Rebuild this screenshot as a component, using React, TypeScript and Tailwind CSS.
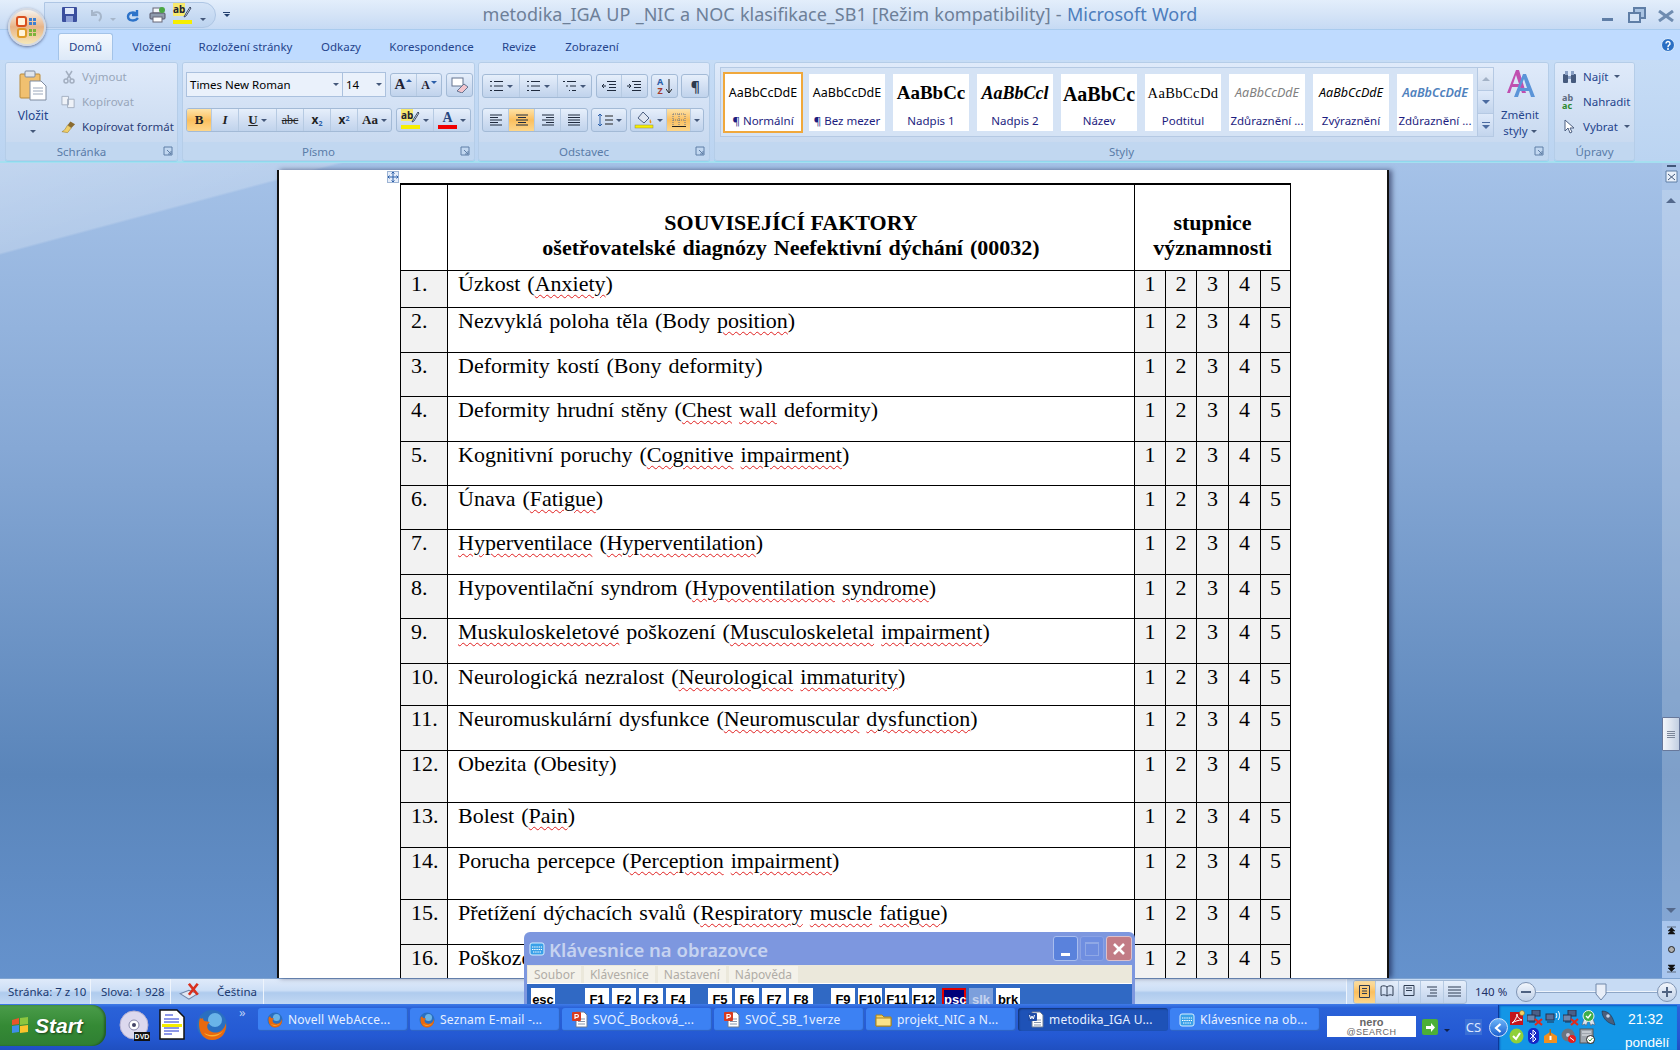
import React from "react";

const Sq = ({ children }: { children: React.ReactNode }) => (
  <span className="underline decoration-wavy decoration-[#e02020] decoration-1 underline-offset-[3px]">{children}</span>
);

const tableRows: { n: string; h: string; text: React.ReactNode }[] = [
  { n: "1.", h: "h-[37px]", text: <>Úzkost (<Sq>Anxiety</Sq>)</> },
  { n: "2.", h: "h-[45px]", text: <>Nezvyklá poloha těla (Body <Sq>position</Sq>)</> },
  { n: "3.", h: "h-[44px]", text: <>Deformity kostí (Bony deformity)</> },
  { n: "4.", h: "h-[45px]", text: <>Deformity hrudní stěny (<Sq>Chest</Sq> <Sq>wall</Sq> deformity)</> },
  { n: "5.", h: "h-[44px]", text: <>Kognitivní poruchy (<Sq>Cognitive</Sq> <Sq>impairment</Sq>)</> },
  { n: "6.", h: "h-[44px]", text: <>Únava (<Sq>Fatigue</Sq>)</> },
  { n: "7.", h: "h-[45px]", text: <><Sq>Hyperventilace</Sq> (<Sq>Hyperventilation</Sq>)</> },
  { n: "8.", h: "h-[44px]", text: <>Hypoventilační syndrom (<Sq>Hypoventilation</Sq> <Sq>syndrome</Sq>)</> },
  { n: "9.", h: "h-[45px]", text: <><Sq>Muskuloskeletové</Sq> poškození (<Sq>Musculoskeletal</Sq> <Sq>impairment</Sq>)</> },
  { n: "10.", h: "h-[42px]", text: <>Neurologická nezralost (<Sq>Neurological</Sq> <Sq>immaturity</Sq>)</> },
  { n: "11.", h: "h-[45px]", text: <>Neuromuskulární dysfunkce (<Sq>Neuromuscular</Sq> <Sq>dysfunction</Sq>)</> },
  { n: "12.", h: "h-[52px]", text: <>Obezita (Obesity)</> },
  { n: "13.", h: "h-[45px]", text: <>Bolest (<Sq>Pain</Sq>)</> },
  { n: "14.", h: "h-[52px]", text: <>Porucha percepce (<Sq>Perception</Sq> <Sq>impairment</Sq>)</> },
  { n: "15.", h: "h-[45px]", text: <>Přetížení dýchacích svalů (<Sq>Respiratory</Sq> <Sq>muscle</Sq> <Sq>fatigue</Sq>)</> },
  { n: "16.", h: "h-[45px]", text: <>Poškození</> },
];

const scoreCols = ["w-[31px]", "w-[31px]", "w-[32px]", "w-[32px]", "w-[29px]"];

const Caret = ({ c = "border-t-[#44587a]" }: { c?: string }) => (
  <span className={`inline-block w-0 h-0 border-x-[3px] border-x-transparent border-t-[3px] ${c}`} />
);

// ---- small drawn icons ----
const Firefox = ({ s = 16 }: { s?: number }) => (
  <svg width={s} height={s} viewBox="0 0 32 32">
    <circle cx="16" cy="16" r="15" fill="#2a6fc0" />
    <circle cx="19" cy="11" r="7" fill="#69b4e8" />
    <path d="M4 9 C1 18 5 31 16 31 C26 31 31 23 30 14 C28 22 22 25 16 23 C10 21 10 15 14 13 C10 12 7 13 7 9 C6 10 5 10 4 9 Z" fill="#e8690f" />
    <path d="M8 24 C12 29 22 29 27 22 C22 27 13 27 8 24 Z" fill="#f9b233" />
  </svg>
);

const Ppt = () => (
  <svg width="17" height="17" viewBox="0 0 17 17">
    <path d="M5 1h8l3 3v12H5z" fill="#fff" stroke="#6a7a95" />
    <path d="M7 8h7M7 10.5h7M7 13h7" stroke="#8795ad" />
    <rect x="1" y="1" width="9" height="9" rx="1" fill="#d83b20" />
    <path d="M4 8V3.5h2a1.3 1.3 0 0 1 0 2.8H4" fill="none" stroke="#fff" strokeWidth="1.2" />
  </svg>
);

const WordDoc = () => (
  <svg width="17" height="17" viewBox="0 0 17 17">
    <path d="M5 1h8l3 3v12H5z" fill="#fff" stroke="#6a7a95" />
    <path d="M7 9h7M7 11.5h7M7 14h7" stroke="#8795ad" />
    <rect x="1" y="2" width="9" height="8" rx="1" fill="#1f4da8" />
    <path d="M2.5 4l1.2 4 1.3-3 1.3 3 1.2-4" fill="none" stroke="#fff" />
  </svg>
);

const KeyboardIcon = ({ s = 15 }: { s?: number }) => (
  <svg width={s} height={s} viewBox="0 0 16 16">
    <rect x="1" y="2" width="14" height="12" rx="2" fill="#3aa0e8" stroke="#d8f0ff" />
    <path d="M3 6h10M3 8.5h10M4 11h8" stroke="#fff" strokeDasharray="1.4 .8" />
  </svg>
);

const NetX = () => (
  <svg width="16" height="16" viewBox="0 0 16 16">
    <rect x="5" y="0" width="8" height="6" fill="#4a5f86" stroke="#243350" />
    <rect x="0" y="5" width="8" height="6" fill="#6f86ad" stroke="#243350" />
    <path d="M2 12h6" stroke="#243350" />
    <path d="M8 9l7 6M15 9l-7 6" stroke="#e02a1c" strokeWidth="2.2" />
  </svg>
);

const Lines = ({ w = 14, d }: { w?: number; d: string }) => (
  <svg width={w} height="14" viewBox="0 0 14 14">
    <path d={d} stroke="#1f2a3d" strokeWidth="1" fill="none" />
  </svg>
);

const BtnGroup = ({ children, className = "" }: { children: React.ReactNode; className?: string }) => (
  <div className={`flex h-[24px] rounded-[3px] border border-[#a3bad6] bg-gradient-to-b from-[#e6effb] via-[#d3e0f3] to-[#c0d3ec] overflow-hidden ${className}`}>
    {children}
  </div>
);

const Cell = ({ w, active, children }: { w: string; active?: boolean; children: React.ReactNode }) => (
  <div className={`${w} flex items-center justify-center gap-[3px] border-r border-[#b6cae2] last:border-r-0 ${active ? "bg-gradient-to-b from-[#fde3a8] via-[#fbbf5d] to-[#fdd68a]" : ""}`}>
    {children}
  </div>
);

const Group = ({ w, label, launcher = true, children }: { w: string; label: string; launcher?: boolean; children: React.ReactNode }) => (
  <div className={`${w} h-[99px] flex flex-col rounded-[3px] border border-[#b5cde8] shadow-[0_1px_0_#8fd8ee] overflow-hidden`}>
    <div className="h-[81px] bg-gradient-to-b from-[#dfeafa] to-[#c9daf0]">{children}</div>
    <div className={`h-[18px] relative flex items-center justify-center bg-[#c1d7f0] text-[11.5px] text-[#5a7ca8] ${launcher ? "pr-[20px]" : ""}`}>
      {label}
      {launcher && (
        <svg className="absolute right-[4px] top-[4px]" width="10" height="10" viewBox="0 0 10 10">
          <path d="M1 9V1h8v8zM4 4l4 4M8 5v3H5" fill="none" stroke="#5f7ea6" />
        </svg>
      )}
    </div>
  </div>
);

const styles = [
  { label: "¶ Normální", prev: "AaBbCcDdE", cls: "text-[12.5px] text-black", active: true },
  { label: "¶ Bez mezer", prev: "AaBbCcDdE", cls: "text-[12.5px] text-black" },
  { label: "Nadpis 1", prev: "AaBbCc", cls: "font-['Liberation_Serif',serif] font-bold text-[19px] text-black" },
  { label: "Nadpis 2", prev: "AaBbCcl", cls: "font-['Liberation_Serif',serif] font-bold italic text-[18px] text-black" },
  { label: "Název", prev: "AaBbCc", cls: "font-['Liberation_Serif',serif] font-bold text-[20px] text-black" },
  { label: "Podtitul", prev: "AaBbCcDd", cls: "font-['Liberation_Serif',serif] text-[14.5px] tracking-[0.4px] text-black" },
  { label: "Zdůraznění ...", prev: "AaBbCcDdE", cls: "italic text-[12.5px] text-[#808080]" },
  { label: "Zvýraznění", prev: "AaBbCcDdE", cls: "italic text-[12.5px] text-black" },
  { label: "Zdůraznění ...", prev: "AaBbCcDdE", cls: "italic font-semibold text-[12.5px] text-[#4f81bd]" },
];

const tabs = [
  { t: "Vložení", w: "w-[67px]" },
  { t: "Rozložení stránky", w: "w-[121px]" },
  { t: "Odkazy", w: "w-[70px]" },
  { t: "Korespondence", w: "w-[111px]" },
  { t: "Revize", w: "w-[64px]" },
  { t: "Zobrazení", w: "w-[82px]" },
];

const fkeys: { k: string; gap?: string; kind?: string }[] = [
  { k: "F1", gap: "ml-[27px]" }, { k: "F2" }, { k: "F3" }, { k: "F4" },
  { k: "F5", gap: "ml-[15px]" }, { k: "F6" }, { k: "F7" }, { k: "F8" },
  { k: "F9", gap: "ml-[15px]" }, { k: "F10" }, { k: "F11" }, { k: "F12" },
  { k: "psc", gap: "ml-[3px]", kind: "psc" }, { k: "slk", kind: "slk" }, { k: "brk" },
];

const taskItems: { t: string; icon: React.ReactNode; active?: boolean }[] = [
  { t: "Novell WebAcce...", icon: <Firefox /> },
  { t: "Seznam E-mail -...", icon: <Firefox /> },
  { t: "SVOČ_Bocková_...", icon: <Ppt /> },
  { t: "SVOČ_SB_1verze", icon: <Ppt /> },
  {
    t: "projekt_NIC a N...",
    icon: (
      <svg width="17" height="16" viewBox="0 0 17 16">
        <path d="M1 3h6l2 2h7v9H1z" fill="#f6d365" stroke="#a98420" />
        <path d="M1 6h15v8H1z" fill="#fbe38a" stroke="#a98420" />
      </svg>
    ),
  },
  { t: "metodika_IGA U...", icon: <WordDoc />, active: true },
  { t: "Klávesnice na ob...", icon: <KeyboardIcon s={16} /> },
];

const TitleBar = () => (
  <div className="h-[30px] flex items-center bg-gradient-to-b from-[#e3eefb] via-[#d5e4f7] to-[#c6daf4] border-b border-[#a9cbee]">
    <div className="ml-[44px] h-[26px] w-[172px] flex items-center gap-[4px] pl-[17px] rounded-r-[13px] border border-[#aec6e4] bg-gradient-to-b from-[#d5e4f7] to-[#bcd3ef]">
      <svg width="15" height="15" viewBox="0 0 15 15">
        <rect width="15" height="15" rx="1" fill="#3b4f9e" />
        <rect x="3" y="1" width="9" height="6" fill="#dfe8fa" />
        <rect x="4" y="9" width="7" height="6" fill="#8fa2d8" />
      </svg>
      <svg className="ml-[8px]" width="14" height="14" viewBox="0 0 14 14">
        <path d="M3 2v5h5M3 7c2-4 9-4 9 2 0 2-1 3-2 4" fill="none" stroke="#a6b6ca" strokeWidth="2" />
      </svg>
      <span className="ml-[3px]"><Caret c="border-t-[#a6b6ca]" /></span>
      <svg className="ml-[6px]" width="14" height="14" viewBox="0 0 14 14">
        <path d="M11 2v5H6M11 7C9 3 2 4 2 8.500 2 13 9 14 12 10" fill="none" stroke="#2d73c9" strokeWidth="2.400" />
      </svg>
      <svg className="ml-[5px]" width="17" height="16" viewBox="0 0 17 16">
        <rect x="4" y="1" width="9" height="5" fill="#f3f6fb" stroke="#667" />
        <rect x="1" y="6" width="15" height="6" rx="1" fill="#8f9bad" stroke="#556" />
        <rect x="4" y="10" width="9" height="5" fill="#fff" stroke="#667" />
        <circle cx="13" cy="3" r="3" fill="#4aa843" />
      </svg>
      <div className="ml-[3px] relative w-[19px] h-[18px]">
        <span className="absolute left-0 top-[-3px] bg-[#f7e96d] text-[10px] font-bold leading-[13px] text-[#223]">ab</span>
        <svg className="absolute right-0 top-0" width="9" height="12" viewBox="0 0 9 12"><path d="M7 1L2 9l-1 2 2-1 5-8z" fill="#e8edf5" stroke="#3c4a66" /></svg>
        <div className="absolute bottom-0 left-0 right-0 h-[4px] bg-[#f6ee00]" />
      </div>
      <span className="ml-[4px]"><Caret /></span>
    </div>
    <div className="ml-[7px] flex flex-col items-center gap-[1px]">
      <div className="w-[7px] h-[1px] bg-[#22406f]" />
      <Caret c="border-t-[#22406f]" />
    </div>
    <div className="flex-1 text-center text-[18px] text-[#6d7f98] font-['Noto_Sans',sans-serif] pr-[148px] whitespace-nowrap [word-spacing:0.6px]">
      metodika_IGA UP _NIC a NOC klasifikace_SB1 [Režim kompatibility] - <span className="text-[#4c7dbc]">Microsoft Word</span>
    </div>
    <div className="w-[82px] flex items-center pr-[5px] h-full">
      <div className="ml-[4px] mt-[9px] w-[11px] h-[3px] bg-[#5f7ea6]" />
      <svg className="ml-[15px]" width="18" height="16" viewBox="0 0 18 16">
        <path d="M6 1h11v10H6z" fill="#a9c3e2" stroke="#5f7ea6" strokeWidth="2" />
        <path d="M1 6h11v9H1z" fill="#d5e4f7" stroke="#5f7ea6" strokeWidth="2" />
      </svg>
      <svg className="ml-[11px] mt-[3px]" width="18" height="12" viewBox="0 0 18 12">
        <path d="M2 1l14 10M16 1L2 11" stroke="#6f8cb0" strokeWidth="3" />
      </svg>
    </div>
  </div>
);

const TabRow = () => (
  <div className="h-[30px] flex items-end pl-[58px] bg-[#bfdbff] text-[11.5px] text-[#24448c]">
    <div className="w-[55px] h-[27px] mr-[5px] flex items-center justify-center rounded-t-[3px] border border-b-0 border-[#a3c3e8] bg-gradient-to-b from-[#f5f9fe] to-[#dde9f8]">Domů</div>
    {tabs.map((t) => (
      <div key={t.t} className={`${t.w} h-[27px] flex items-center justify-center`}>{t.t}</div>
    ))}
    <div className="flex-1" />
    <svg className="mb-[8px] mr-[5px]" width="14" height="14" viewBox="0 0 14 14">
      <circle cx="7" cy="7" r="6.500" fill="#2a6fc4" stroke="#dcebfb" />
      <path d="M5 5.500a2 2 0 1 1 3 1.700c-1 .5-1 1-1 2" fill="none" stroke="#fff" strokeWidth="1.500" />
      <circle cx="7" cy="11" r="1" fill="#fff" />
    </svg>
  </div>
);

const Ribbon = () => (
  <div className="h-[103px] flex pl-[5px] pt-[2px] bg-gradient-to-b from-[#c6dcf6] to-[#bbd4f1] border-b-2 border-[#a5dff0]">
    {/* Schránka */}
    <Group w="w-[173px]" label="Schránka">
      <div className="flex h-full">
        <div className="w-[54px] flex flex-col items-center pt-[7px] text-[12px] text-[#24448c]">
          <svg width="28" height="31" viewBox="0 0 28 31">
            <rect x="1" y="4" width="20" height="24" rx="1" fill="#f0c070" stroke="#b98a3a" />
            <rect x="6" y="1" width="10" height="6" rx="1" fill="#dfe5ee" stroke="#7f8ba0" />
            <path d="M11 11h11l5 5v14H11z" fill="#fff" stroke="#7f8ba0" />
            <path d="M14 18h10M14 21h10M14 24h10" stroke="#9aa7bb" />
          </svg>
          <div className="mt-[7px] leading-[16px]">Vložit</div>
          <div className="leading-[8px] mt-[1px]"><Caret /></div>
        </div>
        <div className="flex-1 flex flex-col pt-[1px] pl-[1px] text-[11.5px]">
          {[
            { t: "Vyjmout", c: "text-[#98a6ba]", i: <svg width="14" height="14" viewBox="0 0 14 14"><path d="M4 1l5 8M10 1L5 9" stroke="#a3afc0" strokeWidth="1.500" /><circle cx="4" cy="11" r="2" fill="none" stroke="#a3afc0" strokeWidth="1.500" /><circle cx="10" cy="11" r="2" fill="none" stroke="#a3afc0" strokeWidth="1.500" /></svg> },
            { t: "Kopírovat", c: "text-[#98a6ba]", i: <svg width="16" height="14" viewBox="0 0 16 14"><path d="M1 1h7v9H1zM7 4h7v9H7z" fill="#eef2f8" stroke="#a3afc0" /></svg> },
            { t: "Kopírovat formát", c: "text-[#2a3d78]", i: <svg width="16" height="14" viewBox="0 0 16 14"><path d="M10 1l5 3-4 4-4-3z" fill="#8a6b2f" /><path d="M7 5l4 3-4 5-6-1c3-1 4-4 6-7z" fill="#f0cf6a" stroke="#9c7c2c" strokeWidth=".6" /></svg> },
          ].map((r) => (
            <div key={r.t} className={`h-[25px] flex items-center gap-[6px] ${r.c}`}>
              <span className="w-[15px] flex justify-center">{r.i}</span>
              {r.t}
            </div>
          ))}
        </div>
      </div>
    </Group>
    {/* Písmo */}
    <div className="w-[4px]" />
    <Group w="w-[293px]" label="Písmo">
      <div className="pl-[3px] pt-[9px]">
        <div className="flex items-center h-[25px] text-[11.5px] text-black">
          <div className="w-[157px] h-[25px] flex items-center justify-between px-[3px] border border-[#abc1de] bg-[#eaf1fb]">Times New Roman<Caret /></div>
          <div className="w-[43px] h-[25px] flex items-center justify-between px-[3px] border border-l-0 border-[#abc1de] bg-[#eaf1fb]">14<Caret /></div>
          <BtnGroup className="ml-[4px]">
            <Cell w="w-[26px]"><span className="font-['Liberation_Serif',serif] font-bold text-[15px] text-[#223]">A</span><span className="-ml-[2px] -mt-[9px] inline-block w-0 h-0 border-x-[3px] border-x-transparent border-b-[3px] border-b-[#2b5ea8]" /></Cell>
            <Cell w="w-[24px]"><span className="font-['Liberation_Serif',serif] font-bold text-[12px] text-[#223]">A</span><span className="-ml-[2px] -mt-[9px]"><Caret c="border-t-[#2b5ea8]" /></span></Cell>
          </BtnGroup>
          <BtnGroup className="ml-[4px]">
            <Cell w="w-[25px]">
              <svg width="18" height="16" viewBox="0 0 18 16"><rect x="1" y="1" width="11" height="8" fill="#fff" stroke="#64748f" /><path d="M6 14l7-7 4 3-6 6z" fill="#f2c4cc" stroke="#64748f" /></svg>
            </Cell>
          </BtnGroup>
        </div>
        <div className="flex mt-[11px]">
          <BtnGroup>
            <Cell w="w-[25px]" active><span className="font-['Liberation_Serif',serif] font-bold text-[13px] text-[#222]">B</span></Cell>
            <Cell w="w-[27px]"><span className="font-['Liberation_Serif',serif] italic font-bold text-[13px] text-[#222]">I</span></Cell>
            <Cell w="w-[38px]"><span className="font-['Liberation_Serif',serif] font-bold underline text-[13px] text-[#222]">U</span><Caret /></Cell>
            <Cell w="w-[27px]"><span className="line-through font-['Liberation_Serif',serif] text-[12px] text-[#222]">abc</span></Cell>
            <Cell w="w-[27px]"><span className="font-bold text-[12px] text-[#222]">x<sub className="text-[7px] text-[#2b5ea8]">2</sub></span></Cell>
            <Cell w="w-[27px]"><span className="font-bold text-[12px] text-[#222]">x<sup className="text-[7px] text-[#2b5ea8]">2</sup></span></Cell>
            <Cell w="w-[33px]"><span className="font-['Liberation_Serif',serif] font-bold text-[13px] text-[#222]">Aa</span><Caret /></Cell>
          </BtnGroup>
          <BtnGroup className="ml-[4px]">
            <Cell w="w-[37px]">
              <div className="relative w-[19px] h-[18px]">
                <span className="absolute left-0 top-[-2px] bg-[#f7e96d] text-[10px] font-bold leading-[12px] text-[#223]">ab</span>
                <svg className="absolute right-0 top-0" width="9" height="12" viewBox="0 0 9 12"><path d="M7 1L2 9l-1 2 2-1 5-8z" fill="#e8edf5" stroke="#3c4a66" /></svg>
                <div className="absolute bottom-0 left-0 right-0 h-[4px] bg-[#f6ee00]" />
              </div>
              <Caret />
            </Cell>
            <Cell w="w-[36px]">
              <div className="flex flex-col items-center">
                <span className="font-['Liberation_Serif',serif] font-bold text-[14px] leading-[14px] text-[#27477f]">A</span>
                <div className="w-[19px] h-[4px] bg-[#f00000]" />
              </div>
              <Caret />
            </Cell>
          </BtnGroup>
        </div>
      </div>
    </Group>
    {/* Odstavec */}
    <div className="w-[3px]" />
    <Group w="w-[232px]" label="Odstavec">
      <div className="pl-[3px] pt-[11px]">
        <div className="flex">
          <BtnGroup>
            <Cell w="w-[38px]"><Lines d="M0 2.500h2M4 2.500h9M0 7h2M4 7h9M0 11.500h2M4 11.500h9" /><Caret /></Cell>
            <Cell w="w-[38px]"><Lines d="M0 2.500h2M4 2.500h9M0 7h2M4 7h9M0 11.500h2M4 11.500h9" /><Caret /></Cell>
            <Cell w="w-[34px]"><Lines d="M0 2.500h2M4 2.500h9M3 7h2M7 7h6M6 11.500h1M9 11.500h4" /><Caret /></Cell>
          </BtnGroup>
          <BtnGroup className="ml-[4px]">
            <Cell w="w-[25px]"><Lines d="M5 2.500h9M7 5.500h7M7 8.500h7M5 11.500h9M4 7H0M2 5L0 7l2 2" /></Cell>
            <Cell w="w-[25px]"><Lines d="M5 2.500h9M7 5.500h7M7 8.500h7M5 11.500h9M0 7h4M2 5l2 2-2 2" /></Cell>
          </BtnGroup>
          <BtnGroup className="ml-[3px]">
            <Cell w="w-[26px]">
              <span className="text-[9px] font-bold leading-[9px] text-[#2b5ea8] text-center">A<br /><span className="text-[#a43a2e]">Z</span></span>
              <svg width="6" height="15" viewBox="0 0 6 15"><path d="M3 0v13M0 10l3 4 3-4" fill="none" stroke="#222" /></svg>
            </Cell>
          </BtnGroup>
          <BtnGroup className="ml-[3px]">
            <Cell w="w-[26px]"><span className="font-bold text-[14px] text-[#2c3a50]">¶</span></Cell>
          </BtnGroup>
        </div>
        <div className="flex mt-[10px]">
          <BtnGroup>
            <Cell w="w-[26px]"><Lines d="M1 2h12M1 4.500h8M1 7h12M1 9.500h8M1 12h12" /></Cell>
            <Cell w="w-[26px]" active><Lines d="M1 2h12M3 4.500h8M1 7h12M3 9.500h8M1 12h12" /></Cell>
            <Cell w="w-[26px]"><Lines d="M1 2h12M5 4.500h8M1 7h12M5 9.500h8M1 12h12" /></Cell>
            <Cell w="w-[26px]"><Lines d="M1 2h12M1 4.500h12M1 7h12M1 9.500h12M1 12h12" /></Cell>
          </BtnGroup>
          <BtnGroup className="ml-[3px]">
            <Cell w="w-[34px]">
              <svg width="16" height="14" viewBox="0 0 16 14"><path d="M3 1v12M1 3l2-2 2 2M1 11l2 2 2-2" stroke="#2b5ea8" fill="none" /><path d="M8 3h8M8 7h8M8 11h8" stroke="#222" /></svg>
              <Caret />
            </Cell>
          </BtnGroup>
          <BtnGroup className="ml-[3px]">
            <Cell w="w-[36px]">
              <svg width="20" height="18" viewBox="0 0 20 18"><path d="M9 1l6 6-5 5-6-5z" fill="#dfe6f1" stroke="#4c5f80" /><path d="M16 8c1 2 2 3 1 4s-2-1-1-4z" fill="#e58f1a" /><rect x="1" y="14" width="18" height="3" fill="#f6ee00" stroke="#8c8c4c" strokeWidth=".5" /></svg>
              <Caret />
            </Cell>
            <Cell w="w-[24px]" active>
              <svg width="14" height="14" viewBox="0 0 14 14"><path d="M1 1h12M1 7h12M7 1v12M1 1v12M13 1v12" stroke="#6b7486" strokeDasharray="1 1" fill="none" /><path d="M0 13.500h14" stroke="#222" /></svg>
            </Cell>
            <Cell w="w-[12px]"><Caret /></Cell>
          </BtnGroup>
        </div>
      </div>
    </Group>
    {/* Styly */}
    <div className="w-[4px]" />
    <Group w="w-[835px]" label="Styly">
      <div className="flex pl-[5px] pt-[4px] h-full">
        <div className="w-[758px] h-[70px] flex items-center gap-[8px] pl-[4px] border border-[#b5c9e3] bg-[#d5e3f5]">
          {styles.map((s, i) => (
            <div key={i} className={`w-[76px] h-[57px] shrink-0 flex flex-col items-center bg-white ${s.active ? "outline-2 outline-[#f0a83c]" : ""}`}>
              <div className={`h-[37px] pt-[3px] w-full overflow-hidden flex items-center justify-center whitespace-nowrap ${s.cls}`}>{s.prev}</div>
              <div className="text-[11.5px] text-[#1d1d80] leading-[20px] whitespace-nowrap">{s.label}</div>
            </div>
          ))}
        </div>
        <div className="w-[16px] h-[70px] flex flex-col">
          <div className="h-[24px] flex items-center justify-center border border-l-0 border-[#b5c9e3] bg-gradient-to-b from-[#e6eefa] to-[#d0ddef]"><span className="inline-block w-0 h-0 border-x-[4px] border-x-transparent border-b-[4px] border-b-[#a3b2c6]" /></div>
          <div className="h-[23px] flex items-center justify-center border border-l-0 border-t-0 border-[#b5c9e3] bg-gradient-to-b from-[#dfeafa] to-[#c3d5ed]"><span className="inline-block w-0 h-0 border-x-[4px] border-x-transparent border-t-[4px] border-t-[#4b6ba0]" /></div>
          <div className="h-[23px] flex flex-col items-center justify-center gap-[2px] border border-l-0 border-t-0 border-[#b5c9e3] bg-gradient-to-b from-[#dfeafa] to-[#c3d5ed]"><span className="w-[8px] h-[1px] bg-[#4b6ba0]" /><span className="inline-block w-0 h-0 border-x-[4px] border-x-transparent border-t-[4px] border-t-[#4b6ba0]" /></div>
        </div>
        <div className="w-[52px] flex flex-col items-center text-[11.5px] leading-[16px] text-[#24448c]">
          <svg className="mt-[1px] mb-[8px]" width="32" height="31" viewBox="0 0 32 31">
            <path d="M3 25L12 2h3l7 23h-4l-2-6H8l-2 6zM9 16h6l-3-9z" fill="#c04fb0" />
            <path d="M10 29L19 6h3l9 23h-4l-2-6h-9l-2 6zM16 20h7l-3-9z" fill="#5b94d8" />
          </svg>
          <div>Změnit</div>
          <div className="flex items-center gap-[3px]">styly <Caret /></div>
        </div>
      </div>
    </Group>
    {/* Úpravy */}
    <div className="w-[5px]" />
    <Group w="w-[81px]" label="Úpravy" launcher={false}>
      <div className="pt-[1px] pl-[7px] text-[11.5px] text-[#24448c]">
        <div className="h-[25px] flex items-center gap-[6px]">
          <svg width="15" height="14" viewBox="0 0 15 14"><rect x="1" y="4" width="5" height="9" rx="1" fill="#455a7d" /><rect x="9" y="4" width="5" height="9" rx="1" fill="#455a7d" /><rect x="3" y="1" width="3" height="4" fill="#8aa0c4" /><rect x="9" y="1" width="3" height="4" fill="#8aa0c4" /><rect x="6" y="6" width="3" height="3" fill="#8aa0c4" /></svg>
          Najít <Caret />
        </div>
        <div className="h-[25px] flex items-center gap-[6px]">
          <span className="w-[15px] text-[9px] leading-[8px] font-bold text-[#5d6b80]">ab<br /><span className="text-[#2d8a2d]">ac</span></span>
          Nahradit
        </div>
        <div className="h-[25px] flex items-center gap-[6px]">
          <svg width="15" height="15" viewBox="0 0 15 15"><path d="M3 1v11l3-3 2 5 2-1-2-4h4z" fill="#fff" stroke="#4c5f80" /></svg>
          Vybrat <Caret />
        </div>
      </div>
    </Group>
  </div>
);

const DocTable = () => (
  <div className="w-[891px] border-t-2 border-black font-['Liberation_Serif',serif] text-[22px] leading-[25px] text-black">
    <div className="flex h-[86px] border-b border-black border-x border-x-black font-bold">
      <div className="w-[47px] border-r border-black" />
      <div className="w-[687px] border-r border-black flex flex-col justify-end items-center pb-[10px]">
        <div>SOUVISEJÍCÍ FAKTORY</div>
        <div className="[word-spacing:1.500px]">ošetřovatelské diagnózy Neefektivní dýchání (00032)</div>
      </div>
      <div className="flex-1 flex flex-col justify-end items-center pb-[10px]">
        <div>stupnice</div>
        <div>významnosti</div>
      </div>
    </div>
    {tableRows.map((r) => (
      <div key={r.n} className={`${r.h} flex border-b border-black border-x border-x-black`}>
        <div className="w-[47px] border-r border-black bg-[#f2f2f2] pl-[10px]">{r.n}</div>
        <div className="w-[687px] border-r border-black pl-[10px] whitespace-nowrap [word-spacing:1.500px]">{r.text}</div>
        {scoreCols.map((w, i) => (
          <div key={i} className={`${w} ${i < 4 ? "border-r border-black" : ""} bg-[#f2f2f2] text-center`}>{i + 1}</div>
        ))}
      </div>
    ))}
  </div>
);

const DocArea = () => (
  <div className="h-[815px] flex bg-[linear-gradient(165deg,rgba(255,255,255,0.32)_0%,rgba(255,255,255,0.22)_7.100%,rgba(255,255,255,0)_7.300%),linear-gradient(180deg,#a5c2e8_0%,#86a8d5_35%,#5a85ba_75%,#6592cd_100%)]">
    <div className="flex-1 pl-[277px] pt-[7px]">
      <div className="relative w-[1112px] h-[808px] overflow-hidden bg-white border-x-2 border-x-[#111] shadow-[3px_0_5px_rgba(0,0,40,0.5)] pl-[121px] pt-[13px]">
        <div className="absolute left-[108px] top-[1px] w-[12px] h-[12px] flex items-center justify-center border border-[#9db4d4] bg-[#e6eefa]">
          <svg width="10" height="10" viewBox="0 0 10 10"><path d="M5 0v10M0 5h10M3.500 1.500L5 0l1.500 1.500M3.500 8.500L5 10l1.500-1.500M1.500 3.500L0 5l1.500 1.500M8.500 3.500L10 5 8.500 6.500" fill="none" stroke="#2b5ea8" /></svg>
        </div>
        <DocTable />
      </div>
    </div>
    <div className="w-[18px] flex flex-col">
      <div className="h-[27px] flex flex-col items-center bg-[#a9c4e8]">
        <div className="w-[9px] h-[2px] mt-[2px] bg-[#42587a]" />
        <svg className="mt-[3px]" width="13" height="13" viewBox="0 0 13 13"><path d="M1 1h11v11H1z" fill="#e9f0fa" stroke="#5f7ea6" /><path d="M3 4l7 6M10 4L3 10" stroke="#42587a" /></svg>
      </div>
      <div className="flex-1 flex flex-col bg-[#ffffff38]">
        <div className="h-[21px] flex items-center justify-center"><span className="inline-block w-0 h-0 border-x-[5px] border-x-transparent border-b-[5px] border-b-[#54698c]" /></div>
        <div className="h-[506px]" />
        <div className="h-[34px] flex flex-col items-center justify-center gap-[1px] rounded-[1px] border border-[#68789a] bg-gradient-to-r from-[#f3f6fb] via-[#dde4ef] to-[#c2cfe2]">
          <span className="w-[8px] h-[1px] bg-[#7b8699]" /><span className="w-[8px] h-[1px] bg-[#7b8699]" /><span className="w-[8px] h-[1px] bg-[#7b8699]" /><span className="w-[8px] h-[1px] bg-[#7b8699]" />
        </div>
        <div className="flex-1" />
        <div className="h-[21px] flex items-center justify-center"><span className="inline-block w-0 h-0 border-x-[5px] border-x-transparent border-t-[5px] border-t-[#54698c]" /></div>
      </div>
      <div className="h-[57px] flex flex-col items-center justify-around bg-[#a9c6ee] text-black">
        <svg width="9" height="9" viewBox="0 0 9 9"><path d="M0 1h9M4.500 1.500L8 5H1zM4.500 4L8 8H1z" fill="#111" stroke="#111" strokeWidth=".5" /></svg>
        <span className="w-[7px] h-[7px] rounded-full border border-[#222] bg-[#b0b0b0]" />
        <svg width="9" height="9" viewBox="0 0 9 9"><path d="M0 8h9M4.500 7.500L8 4H1zM4.500 5L8 1H1z" fill="#111" stroke="#111" strokeWidth=".5" /></svg>
      </div>
    </div>
  </div>
);

const viewIcon = (d: string, key: number, active?: boolean) => (
  <Cell key={key} w="w-[22.400px]" active={active}>
    <svg width="15" height="15" viewBox="0 0 15 15"><path d={d} fill="none" stroke="#2f3c52" /></svg>
  </Cell>
);

const StatusBar = () => (
  <div className="h-[26px] flex items-center bg-[linear-gradient(180deg,#dfeafa_0%,#cddff6_45%,#afcbee_55%,#c2d8f3_100%)] border-t border-[#7fa3d0] text-[11.5px] text-[#1c3a70]">
    <div className="w-[91px] h-full pl-[8px] flex items-center border-r border-[#eef4fc]">Stránka: 7 z 10</div>
    <div className="w-[80px] h-full pl-[10px] flex items-center border-r border-[#eef4fc]">Slova: 1 928</div>
    <div className="w-[93px] h-full pl-[8px] flex items-center gap-[16px] border-r border-[#eef4fc]">
      <svg width="22" height="20" viewBox="0 0 20 17">
        <path d="M1 10l8-3 8 3-8 5z" fill="#dfe7f3" stroke="#6f84a6" />
        <path d="M9 1l8 10M17 1L9 11" stroke="#d8301f" strokeWidth="2.400" />
      </svg>
      Čeština
    </div>
    <div className="flex-1" />
    <div className="w-[334px] h-full border-l border-[#eef4fc] flex items-center pl-[6px] bg-[#c7dbf4]">
      <BtnGroup className="h-[23px]">
        {viewIcon("M2.500 1.500h10v12h-10zM5 4.500h5M5 7h5M5 9.500h5", 0, true)}
        {viewIcon("M1 2.500c2-1 4-1 6 .5 2-1.500 4-1.500 6-.5v9c-2-1-4-1-6 .5-2-1.500-4-1.500-6-.5zM7 3v9", 1)}
        {viewIcon("M2 1.500h10v10H2zM4 4h6M4 6.500h6", 2)}
        {viewIcon("M3 3h10M6 6h7M6 9h7M3 12h10", 3)}
        {viewIcon("M1 3h13M1 6h13M1 9h13M1 12h13", 4)}
      </BtnGroup>
      <span className="ml-[8px] w-[41px] text-[#1d2f66]">140 %</span>
      <div className="w-[20px] h-[20px] shrink-0 rounded-full border border-[#7f94b3] bg-gradient-to-b from-[#f2f6fc] to-[#c0d1e8] flex items-center justify-center">
        <span className="w-[10px] h-[2px] bg-[#4f6281]" />
      </div>
      <div className="relative w-[121px] h-[2px] bg-[#eef4fc] border-b border-[#8ea6c6]">
        <svg className="absolute left-[59px] -top-[8px]" width="12" height="18" viewBox="0 0 12 18"><path d="M1 1h10v10l-5 6-5-6z" fill="#e8eef8" stroke="#7188aa" /></svg>
      </div>
      <div className="w-[20px] h-[20px] shrink-0 rounded-full border border-[#7f94b3] bg-gradient-to-b from-[#f2f6fc] to-[#c0d1e8] flex items-center justify-center relative">
        <span className="w-[10px] h-[2px] bg-[#4f6281]" />
        <span className="absolute w-[2px] h-[10px] bg-[#4f6281]" />
      </div>
    </div>
  </div>
);

const Taskbar = () => (
  <div className="h-[46px] flex items-start bg-[linear-gradient(180deg,#3f7be8_0%,#2a62d8_8%,#2459d3_70%,#1f4fc0_100%)] font-['Noto_Sans',sans-serif]">
    <div className="w-[106px] h-[41px] mt-[1px] flex items-center pl-[11px] gap-[5px] rounded-r-[14px] bg-gradient-to-b from-[#4a9c4a] via-[#358a35] to-[#2f7f33] shadow-[inset_-2px_0_2px_rgba(0,0,0,0.3)]">
      <svg width="19" height="19" viewBox="0 0 19 19">
        <path d="M1 4l7-2v6l-7 1z" fill="#e8552a" />
        <path d="M9 2l8-1v7l-8 1z" fill="#8cc63f" />
        <path d="M1 10l7-1v7l-7 1z" fill="#3f8fe8" />
        <path d="M9 10l8-1v7l-8 1z" fill="#fbc42c" />
      </svg>
      <span className="font-['Liberation_Sans',sans-serif] font-bold italic text-[21px] text-white [text-shadow:1px_1px_2px_rgba(0,0,0,0.5)]">Start</span>
    </div>
    <div className="w-[152px] h-[42px] flex items-center pl-[13px] relative">
      <svg width="31" height="31" viewBox="0 0 31 31">
        <circle cx="15" cy="15" r="14" fill="#dcd8ee" stroke="#b5b0d0" />
        <circle cx="15" cy="15" r="5" fill="#fff" stroke="#88a" />
        <circle cx="15" cy="15" r="2" fill="#446" />
        <rect x="15" y="22" width="16" height="9" fill="#111" />
        <text x="23" y="29" textAnchor="middle" fontSize="7" fontWeight="700" fill="#fff" fontFamily="Liberation Sans">DVD</text>
      </svg>
      <svg className="ml-[9px]" width="26" height="32" viewBox="0 0 26 32">
        <path d="M1 1h17l7 7v22H1z" fill="#fff" stroke="#111" strokeWidth="1.500" />
        <path d="M6 6h8M5 10h15M5 13h15M5 19h15M5 22h15M5 25h8" stroke="#1a2fd0" />
        <rect x="3" y="15" width="20" height="3" fill="#f6ee00" />
      </svg>
      <span className="ml-[11px]"><Firefox s={32} /></span>
      <span className="absolute left-[133px] top-[1px] text-[13px] text-[#b8cdf5] leading-[14px]">»</span>
    </div>
    <div className="flex gap-[2px] pt-[4px]">
      {taskItems.map((t) => (
        <div key={t.t} className={`w-[150px] h-[23px] flex items-center gap-[5px] pl-[9px] rounded-[3px] text-[12px] text-[#e8f0ff] tracking-[0.2px] whitespace-nowrap ${t.active ? "bg-[#1e52b7] shadow-[inset_1px_1px_2px_rgba(0,0,0,0.4)]" : "bg-[#3c81f3] shadow-[inset_-1px_-1px_1px_rgba(0,0,50,0.25)]"}`}>
          {t.icon}
          {t.t}
        </div>
      ))}
    </div>
    <div className="ml-[7px] mt-[12px] w-[89px] h-[21px] bg-white flex flex-col items-center justify-center font-['Liberation_Sans',sans-serif] text-[#666] leading-[10px]">
      <span className="text-[11px] font-bold">nero</span>
      <span className="text-[9px] tracking-[0.5px]">@SEARCH</span>
    </div>
    <div className="ml-[6px] mt-[15px] w-[16px] h-[16px] rounded-[2px] bg-[#4caf38] flex items-center justify-center">
      <svg width="11" height="11" viewBox="0 0 11 11"><path d="M1 4h5V1l4 4.500L6 10V7H1z" fill="#fff" /></svg>
    </div>
    <span className="ml-[6px] mt-[21px] leading-[3px]"><Caret c="border-t-[#10204a]" /></span>
    <div className="ml-[15px] mt-[15px] w-[17px] h-[16px] bg-[#3a6fd5] text-[13px] leading-[16px] text-center text-[#dbe7ff]">CS</div>
    <div className="relative ml-[16px] w-[179px] h-[45px] mt-[1px] bg-[#1396e6] border-l border-[#0b3a9a] shadow-[inset_1px_1px_2px_#0d5cc0] pl-[10px] pt-[5px] flex">
      <div className="absolute -left-[10px] top-[13px] w-[19px] h-[19px] rounded-full bg-gradient-to-b from-[#6cb5f8] to-[#1c5fd0] border border-[#cfe3fb] flex items-center justify-center">
        <svg width="9" height="10" viewBox="0 0 9 10"><path d="M6.500 1L2 5l4.500 4" fill="none" stroke="#fff" strokeWidth="2.200" /></svg>
      </div>
      <div className="w-[110px] flex flex-col gap-[2px]">
        <div className="flex gap-[2px] h-[16px] items-center">
          <svg width="16" height="16" viewBox="0 0 16 16"><rect x="1" y="2" width="13" height="13" fill="#c4161c" /><path d="M3 13c3-2 5-6 5-9 0 3 2 5 5 6-3 0-7 1-10 3z" fill="none" stroke="#fff" /><circle cx="13" cy="3" r="2.500" fill="#f6d365" stroke="#7a5b10" strokeWidth=".5" /></svg>
          <NetX />
          <svg width="16" height="16" viewBox="0 0 16 16"><rect x="1" y="4" width="8" height="6" fill="#5a6f98" stroke="#243350" /><path d="M2 12h7" stroke="#243350" /><path d="M11 3c1 1 1 4 0 5M13 1c2 2 2 7 0 9" fill="none" stroke="#fff" /></svg>
          <NetX />
          <svg width="15" height="16" viewBox="0 0 15 16"><path d="M3 9l-2 6 3-1 1 2 2-5M12 9l2 6-3-1-1 2-2-5" fill="#dde3ea" stroke="#556" strokeWidth=".5" /><circle cx="7.500" cy="6" r="5.500" fill="#3fae49" stroke="#e6eef0" /><path d="M5 6l2 2 3-4" stroke="#fff" fill="none" strokeWidth="1.400" /></svg>
          <svg className="ml-[3px]" width="15" height="16" viewBox="0 0 15 16"><path d="M1 1c6 0 10 4 12 11l1 3-3-1C5 12 1 7 1 1z" fill="#4a5f7d" stroke="#1a2438" strokeWidth=".5" /><circle cx="7" cy="6" r="1.800" fill="#c8d6ea" /></svg>
        </div>
        <div className="flex gap-[3px] h-[16px] items-center">
          <svg width="15" height="16" viewBox="0 0 15 16"><ellipse cx="7.500" cy="8" rx="7" ry="7.500" fill="#8fd03a" /><path d="M4 8l3 3 4-6" stroke="#fff" strokeWidth="2" fill="none" /></svg>
          <svg width="13" height="16" viewBox="0 0 13 16"><rect x="1" y="0" width="11" height="16" rx="5" fill="#1428c8" /><path d="M3 5l6 6-3 3V2l3 3-6 6" stroke="#fff" fill="none" /></svg>
          <svg width="15" height="16" viewBox="0 0 15 16"><path d="M1 15V8l6-4 7 4v7z" fill="#f09020" /><rect x="6.500" y="1" width="1.500" height="6" fill="#b56a10" /><rect x="6.500" y="8" width="2" height="4" fill="#fff" /></svg>
          <svg width="15" height="16" viewBox="0 0 15 16"><circle cx="7" cy="7" r="6.500" fill="#6c737e" /><circle cx="7" cy="7" r="2" fill="#ccd" /><circle cx="11" cy="11" r="4" fill="#e32020" /><path d="M9 9.500l4 3" stroke="#fff" /></svg>
          <svg width="16" height="16" viewBox="0 0 16 16"><rect x="1" y="1" width="13" height="14" fill="#a0a6ae" stroke="#555" /><path d="M3 4h9M3 7h9" stroke="#e8ecf0" /><circle cx="11.500" cy="11.500" r="4" fill="#fff" stroke="#222" /><path d="M9.500 11.500l1.500 1.500 2.500-3" stroke="#2c9c2c" fill="none" /></svg>
        </div>
      </div>
      <div className="flex-1 flex flex-col items-start pl-[6px] text-[14px] text-white leading-[20px] font-['Liberation_Sans',sans-serif]">
        <span className="pl-[3px] -mt-[1px]">21:32</span>
        <span className="text-[13.500px] mt-[4px]">pondělí</span>
      </div>
    </div>
  </div>
);

const OnScreenKeyboard = () => (
  <div className="absolute left-[524px] top-[932px] w-[611px] h-[72px] overflow-hidden rounded-t-[6px] bg-[#7d97df] flex flex-col">
    <div className="h-[33px] flex items-center pl-[5px] shrink-0">
      <KeyboardIcon s={16} />
      <span className="ml-[4px] mt-[2px] flex-1 font-['Noto_Sans',sans-serif] font-semibold text-[18.500px] leading-[24px] text-[#c6d3f0]">Klávesnice na obrazovce</span>
      <div className="w-[25px] h-[25px] flex items-end justify-center pb-[4px] rounded-[3px] bg-[#5a82dc] border border-[#a8bdee]"><span className="w-[9px] h-[3px] bg-white" /></div>
      <div className="ml-[2px] w-[24px] h-[25px] flex items-center justify-center rounded-[3px] bg-[#6f8ee0] border border-[#8aa2e4]"><span className="w-[14px] h-[14px] border border-[#8fa8e6] border-t-2" /></div>
      <div className="ml-[2px] mr-[3px] w-[26px] h-[25px] flex items-center justify-center rounded-[3px] bg-[#c27c86] border border-[#dcc0ca]">
        <svg width="14" height="14" viewBox="0 0 14 14"><path d="M2 2l10 10M12 2L2 12" stroke="#fff" strokeWidth="2.600" /></svg>
      </div>
    </div>
    <div className="mx-[3px] h-[19px] shrink-0 flex items-center gap-[3px] pl-[1px] bg-[#ebe8db] border-b border-white font-['Noto_Sans',sans-serif] text-[12px] text-[#b0aca6]">
      {["Soubor", "Klávesnice", "Nastavení", "Nápověda"].map((m) => (
        <span key={m} className="h-[17px] px-[6px] leading-[17px] bg-[#f4f2ea]">{m}</span>
      ))}
    </div>
    <div className="mx-[3px] flex-1 flex pt-[4px] pl-[4px] gap-[3px] bg-[#3069c4] font-['Liberation_Sans',sans-serif] font-bold text-[13px]">
      <div className="w-[24px] h-[24px] shrink-0 bg-white text-center leading-[24px] text-black">esc</div>
      {fkeys.map((f) => (
        <div
          key={f.k}
          className={`${f.gap ?? ""} w-[24px] h-[24px] shrink-0 text-center ${f.kind === "psc" ? "bg-[#00007a] text-white border-2 border-[#e00000] leading-[20px]" : f.kind === "slk" ? "bg-[#7c9fdc] text-[#c4d3ef] leading-[24px]" : "bg-white text-black leading-[24px]"}`}
        >
          {f.k}
        </div>
      ))}
    </div>
  </div>
);

const OfficeButton = () => (
  <div className="absolute left-[8px] top-[8px] w-[38px] h-[38px] rounded-full border-2 border-[#d4d9e2] bg-gradient-to-b from-[#f7f4ee] via-[#e7b487] to-[#f5e7b8] shadow-[0_1px_3px_rgba(0,0,40,0.5)] flex items-center justify-center">
    <svg width="24" height="24" viewBox="0 0 24 24">
      <rect x="2" y="2" width="9" height="9" rx="2" fill="#fff4dc" stroke="#d9501e" strokeWidth="2" />
      <rect x="14" y="3" width="3" height="3" fill="#3d7fd1" /><rect x="18" y="3" width="3" height="3" fill="#3d7fd1" /><rect x="14" y="7" width="3" height="3" fill="#3d7fd1" /><rect x="18" y="7" width="3" height="3" fill="#3d7fd1" />
      <rect x="3" y="14" width="8" height="8" rx="2" fill="#fff4dc" stroke="#e09b28" strokeWidth="2" />
      <rect x="14" y="14" width="3" height="3" fill="#7bb33a" /><rect x="18" y="14" width="3" height="3" fill="#7bb33a" /><rect x="14" y="18" width="3" height="3" fill="#7bb33a" /><rect x="18" y="18" width="3" height="3" fill="#7bb33a" />
    </svg>
  </div>
);

export default function App() {
  return (
    <div className="relative w-[1680px] h-[1050px] overflow-hidden font-['Noto_Sans',sans-serif]">
      <TitleBar />
      <TabRow />
      <Ribbon />
      <DocArea />
      <StatusBar />
      <Taskbar />
      <OfficeButton />
      <OnScreenKeyboard />
    </div>
  );
}
